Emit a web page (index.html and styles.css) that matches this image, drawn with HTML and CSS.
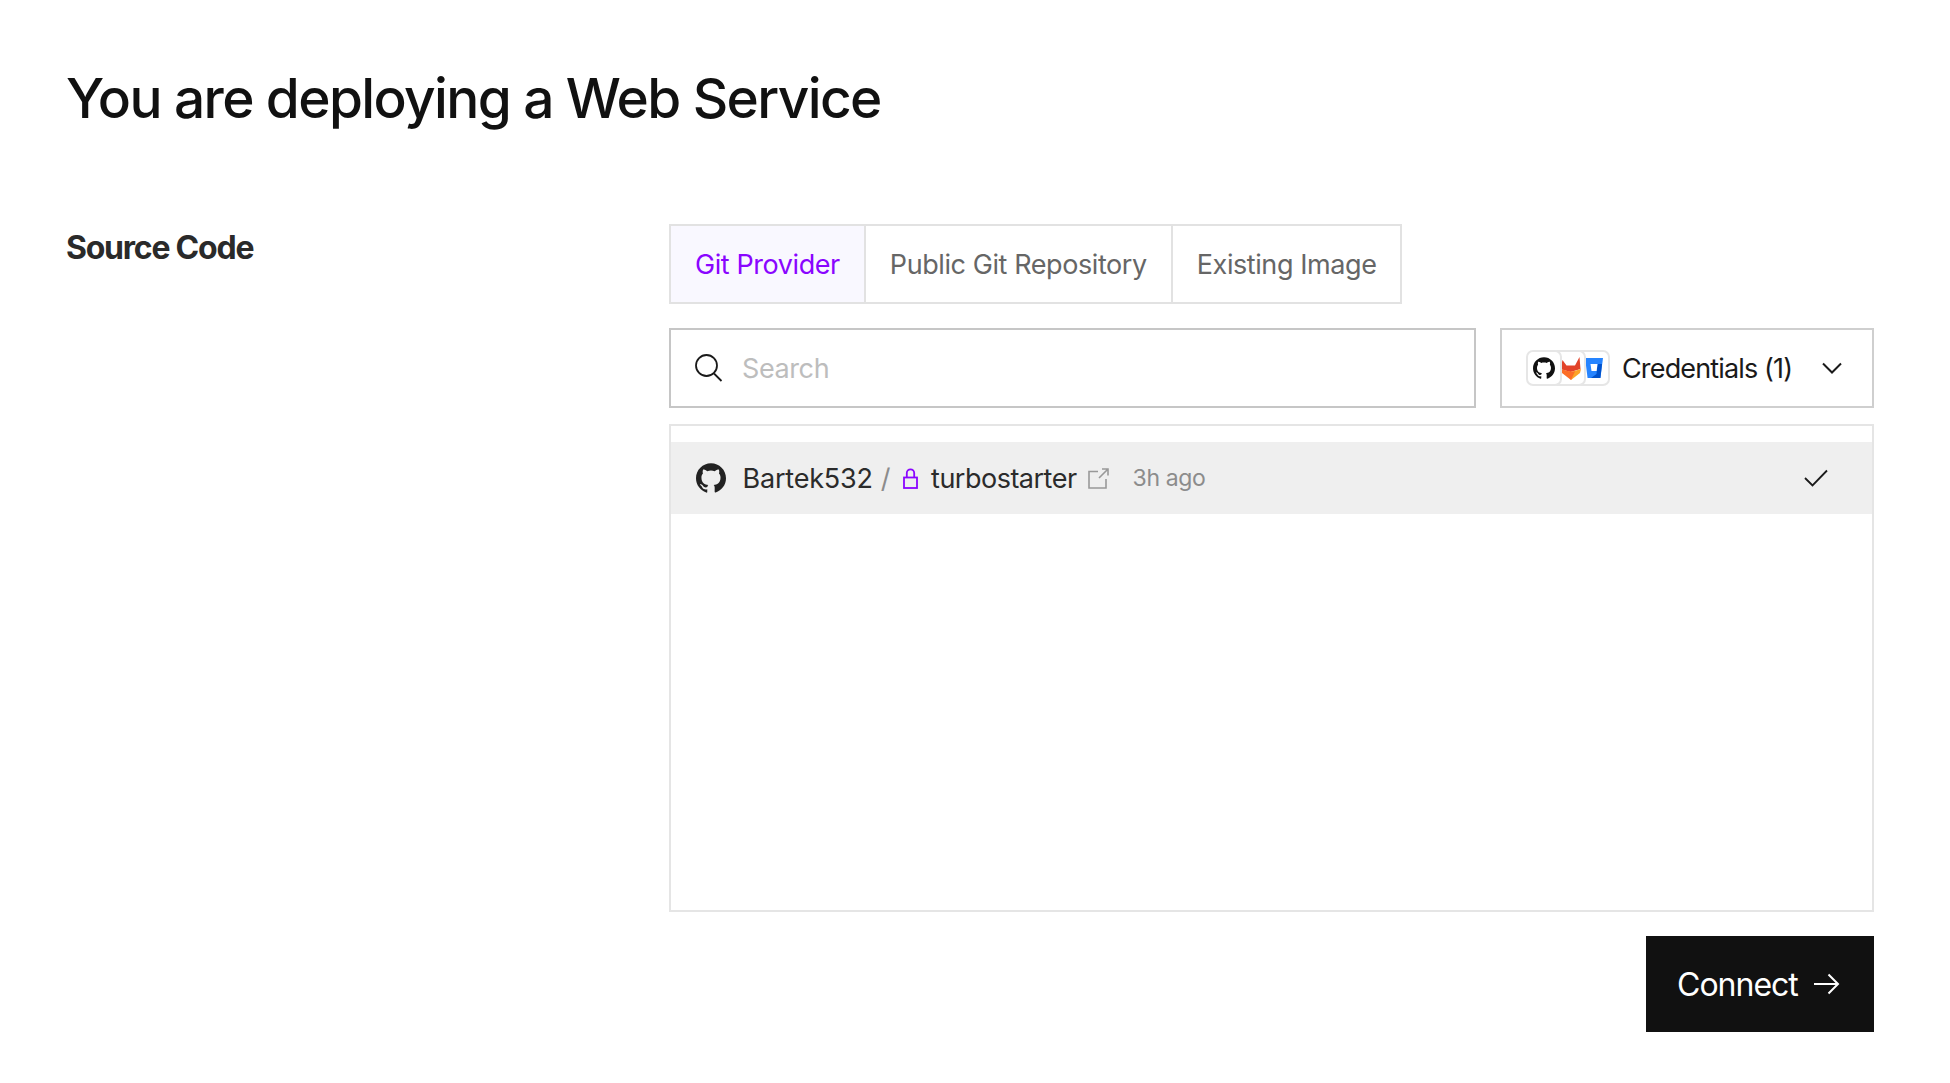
FILE: index.html
```html
<!DOCTYPE html>
<html lang="en">
<head>
<meta charset="utf-8">
<title>You are deploying a Web Service</title>
<link rel="stylesheet" href="styles.css">
</head>
<body>
<main class="page">
  <h1 class="title">You are deploying a Web Service</h1>
  <section class="form">
    <h2 class="label">Source Code</h2>
    <div class="panel">
      <div class="tabs">
        <button class="tab tab-active">Git Provider</button>
        <button class="tab">Public Git Repository</button>
        <button class="tab">Existing Image</button>
      </div>
      <div class="filters">
        <label class="search">
          <svg class="search-icon" viewBox="0 0 28 28" fill="none" stroke="#1a1a1a" stroke-width="1.800"><circle cx="11.500" cy="11.500" r="10.500"/><path d="M19 19.500l7.500 7.500"/></svg>
          <input class="search-input" placeholder="Search">
        </label>
        <button class="creds">
          <span class="tiles">
            <span class="tile tile-a"><svg class="gh-small" viewBox="0 0 24 24"><path fill="#111" d="M12 .297c-6.63 0-12 5.373-12 12 0 5.303 3.438 9.8 8.205 11.385.6.113.82-.258.82-.577 0-.285-.01-1.04-.015-2.04-3.338.724-4.042-1.61-4.042-1.61C4.422 18.07 3.633 17.7 3.633 17.7c-1.087-.744.084-.729.084-.729 1.205.084 1.838 1.236 1.838 1.236 1.07 1.835 2.809 1.305 3.495.998.108-.776.417-1.305.76-1.605-2.665-.3-5.466-1.332-5.466-5.93 0-1.31.465-2.38 1.235-3.22-.135-.303-.54-1.523.105-3.176 0 0 1.005-.322 3.3 1.23.96-.267 1.98-.399 3-.405 1.02.006 2.04.138 3 .405 2.28-1.552 3.285-1.23 3.285-1.23.645 1.653.24 2.873.12 3.176.765.84 1.23 1.91 1.23 3.22 0 4.61-2.805 5.625-5.475 5.92.42.36.81 1.096.81 2.22 0 1.606-.015 2.896-.03 3.286 0 .315.21.69.825.57C20.565 22.092 24 17.592 24 12.297c0-6.627-5.373-12-12-12"/></svg></span>
            <span class="tile tile-b"><svg class="gl" viewBox="0 0 20 23"><path fill="#e24329" d="M1.500 3l4 5.500h8.500l4.500-8.500 1 12-10 3-10-3z"/><path fill="#fc6d26" d="M0 12l10 3v8L1 16z"/><path fill="#fca326" d="M20 12l-10 3v8l9-7z"/><path fill="#fc6d26" d="M6 14.500h8L10 23z"/></svg></span>
            <span class="tile tile-c"><svg class="bb" viewBox="0 0 18 20"><path fill="#2684ff" d="M0 0h18l-2.600 20H2.600z"/><path fill="#0052cc" d="M12.500 6H17l-1.600 14H6l5.500-4z"/><path fill="#fff" d="M5.500 6h7l-.9 7H6.500z"/></svg></span>
          </span>
          <span class="creds-text">Credentials (1)</span>
          <svg class="chevron" viewBox="0 0 20 12" fill="none" stroke="#1a1a1a" stroke-width="2"><path d="M1 1.500l9 9 9-9"/></svg>
        </button>
      </div>
      <div class="list">
        <div class="row">
          <svg class="gh" viewBox="0 0 24 24"><path fill="#222" d="M12 .297c-6.630 0-12 5.373-12 12 0 5.303 3.438 9.800 8.205 11.385.6.113.82-.258.82-.577 0-.285-.01-1.040-.015-2.040-3.338.724-4.042-1.610-4.042-1.610C4.422 18.070 3.633 17.700 3.633 17.700c-1.087-.744.084-.729.084-.729 1.205.084 1.838 1.236 1.838 1.236 1.070 1.835 2.809 1.305 3.495.998.108-.776.417-1.305.76-1.605-2.665-.3-5.466-1.332-5.466-5.930 0-1.310.465-2.380 1.235-3.220-.135-.303-.54-1.523.105-3.176 0 0 1.005-.322 3.300 1.230.96-.267 1.980-.399 3-.405 1.020.006 2.040.138 3 .405 2.280-1.552 3.285-1.230 3.285-1.230.645 1.653.24 2.873.12 3.176.765.84 1.230 1.910 1.230 3.220 0 4.610-2.805 5.625-5.475 5.920.42.36.81 1.096.81 2.220 0 1.606-.015 2.896-.03 3.286 0 .315.21.69.825.57C20.565 22.092 24 17.592 24 12.297c0-6.627-5.373-12-12-12"/></svg>
          <span class="owner">Bartek532</span>
          <span class="slash">/</span>
          <svg class="lock" viewBox="0 0 15 21" fill="none" stroke="#8a05ff" stroke-width="1.800"><rect x="1" y="9.500" width="13" height="10.500"/><path d="M3.800 9.500V5a3.700 3.700 0 0 1 7.400 0v4.500"/></svg>
          <span class="repo">turbostarter</span>
          <svg class="ext" viewBox="0 0 21 21" fill="none" stroke="#999" stroke-width="1.600"><path d="M10 3.500H1v16.500h17V11"/><path d="M11 10l9-9M14 1h6v6.500"/></svg>
          <span class="time">3h ago</span>
          <svg class="check" viewBox="0 0 24 18" fill="none" stroke="#1a1a1a" stroke-width="1.800"><path d="M1 9l7.500 7.500L23 1.500"/></svg>
        </div>
      </div>
      <div class="actions">
        <button class="connect">
          <span>Connect</span>
          <svg class="arrow" viewBox="0 0 26 22" fill="none" stroke="#fff" stroke-width="2"><path d="M0 11h24M14.500 1.500L24 11l-9.500 9.500"/></svg>
        </button>
      </div>
    </div>
  </section>
</main>
</body>
</html>
```
FILE: styles.css
```css
* { box-sizing: border-box; }
html, body { margin: 0; background: #fff; }
body { font-family: "Inter", "Liberation Sans", sans-serif; color: #111; }
button { font: inherit; padding: 0; border: 0; background: none; cursor: pointer; }
.page { height: 1083px; padding: 64px 76px 0 66px; }
.title { margin: 0; font-size: 55px; line-height: 68px; font-weight: 450; letter-spacing: -1.63px; color: #111; }
.form { display: grid; grid-template-columns: 603px 1fr; margin-top: 92px; }
.label { margin: 0; padding-top: 4px; font-size: 32px; line-height: 40px; font-weight: 650; letter-spacing: -1.23px; color: #2a2a2a; }
.panel { display: flex; flex-direction: column; }
.tabs { display: flex; align-self: flex-start; height: 80px; border: 2px solid #e2e2e2; }
.tab { padding: 0 24px; font-size: 27px; letter-spacing: -.42px; color: #666; border-right: 2px solid #e2e2e2; }
.tab:last-child { border-right: 0; }
.tab-active { color: #8a05ff; background: #f9f8ff; }
.filters { display: flex; gap: 24px; margin-top: 24px; }
.search { flex: 1; display: flex; align-items: center; height: 80px; padding-left: 24px; border: 2px solid #c6c6c6; }
.search-icon { width: 28px; height: 28px; flex: none; }
.search-input { flex: 1; margin-left: 19px; border: 0; outline: 0; padding: 0; font: inherit; font-size: 27px; letter-spacing: -.4px; color: #111; background: none; }
.search-input::placeholder { color: #bdbdbd; opacity: 1; }
.creds { display: flex; align-items: center; width: 374px; height: 80px; padding-left: 24px; border: 2px solid #cfcfcf; color: #1a1a1a; font-size: 27px; letter-spacing: -.85px; }
.tiles { display: flex; }
.tile { position: relative; display: flex; align-items: center; justify-content: flex-end; width: 36px; height: 36px; margin-left: -12px; border: 2px solid #e6e6e6; border-radius: 7px; background: #fff; }
.tile-a { margin-left: 0; justify-content: center; z-index: 3; }
.tile-b { z-index: 2; padding-right: 3px; }
.tile-c { z-index: 1; padding-right: 5px; }
.gh-small { width: 22px; height: 22px; }
.gl { width: 20px; height: 23px; }
.bb { width: 18px; height: 20px; }
.creds-text { margin-left: 12px; white-space: nowrap; }
.chevron { width: 20px; height: 12px; margin-left: 30px; flex: none; }
.list { height: 488px; margin-top: 16px; padding-top: 16px; border: 2px solid #e5e5e5; }
.row { display: flex; align-items: center; height: 72px; padding-left: 25px; padding-right: 44px; background: #efefef; font-size: 27px; letter-spacing: -.5px; color: #2b2b2b; }
.gh { width: 30px; height: 30px; flex: none; }
.owner { margin-left: 16.500px; letter-spacing: -.2px; }
.slash { margin-left: 8px; color: #8c8c8c; }
.lock { width: 15px; height: 21px; margin-left: 13px; flex: none; }
.repo { margin-left: 13px; }
.ext { width: 21px; height: 21px; margin-left: 11px; flex: none; }
.time { margin-left: 24px; font-size: 23px; letter-spacing: -.4px; color: #8c8c8c; }
.check { width: 24px; height: 18px; margin-left: auto; flex: none; }
.actions { display: flex; justify-content: flex-end; margin-top: 24px; }
.connect { display: flex; align-items: center; gap: 16px; width: 228px; height: 96px; padding: 0 0 0 31px; background: #111; color: #fff; font-size: 32px; letter-spacing: -1px; }
.arrow { width: 26px; height: 22px; flex: none; }
```
